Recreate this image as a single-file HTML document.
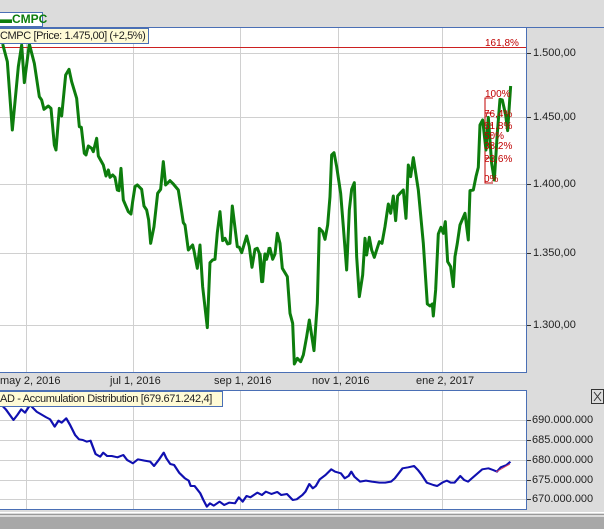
<!DOCTYPE html>
<html><head><style>
body{margin:0;width:604px;height:529px;background:#dcdcdc;position:relative;overflow:hidden;font-family:"Liberation Sans",sans-serif}
.t{position:absolute;font-size:11px;color:#222;white-space:nowrap}
</style></head><body>
<svg width="604" height="529" style="position:absolute;left:0;top:0">
<rect x="0" y="27" width="527" height="346" fill="#fff"/>
<line x1="0" y1="27.5" x2="604" y2="27.5" stroke="#4a6fb5"/>
<line x1="526.5" y1="27" x2="526.5" y2="373" stroke="#4a6fb5"/>
<line x1="0" y1="372.5" x2="527" y2="372.5" stroke="#4a6fb5"/>
<g stroke="#d0d0d0" stroke-width="1">
<line x1="26.5" y1="28" x2="26.5" y2="372"/><line x1="133.5" y1="28" x2="133.5" y2="372"/><line x1="240.5" y1="28" x2="240.5" y2="372"/><line x1="338.5" y1="28" x2="338.5" y2="372"/><line x1="442.5" y1="28" x2="442.5" y2="372"/>
<line x1="0" y1="53.5" x2="526" y2="53.5"/><line x1="0" y1="117.5" x2="526" y2="117.5"/><line x1="0" y1="184.5" x2="526" y2="184.5"/><line x1="0" y1="253.5" x2="526" y2="253.5"/><line x1="0" y1="325.5" x2="526" y2="325.5"/>
</g>
<line x1="0" y1="47.5" x2="526" y2="47.5" stroke="#cc2020"/>
<g stroke="#333"><line x1="527" y1="53.5" x2="531" y2="53.5"/><line x1="527" y1="117.5" x2="531" y2="117.5"/><line x1="527" y1="184.5" x2="531" y2="184.5"/><line x1="527" y1="253.5" x2="531" y2="253.5"/><line x1="527" y1="325.5" x2="531" y2="325.5"/></g>
<g fill="none" stroke="#c00000" stroke-width="1"><polyline points="493,98 485,98 485,183 493,183"/><line x1="485" y1="113" x2="493" y2="113"/><line x1="485" y1="125" x2="493" y2="125"/><line x1="485" y1="135" x2="493" y2="135"/><line x1="485" y1="145" x2="493" y2="145"/><line x1="485" y1="158" x2="493" y2="158"/></g>
<g fill="none" stroke="#0d7d0d" stroke-width="9" stroke-linejoin="round">
<polyline transform="translate(0,30) scale(0.3333)" points="8,42 22,95 37,300 55,110 65,45 73,158 88,42 103,100 118,200 125,210 132,238 145,228 153,235 163,345 168,360 178,235 185,258 197,135 207,118 215,155 230,205 238,290 244,292 253,370 258,375 265,348 275,355 280,365 290,325 295,378 310,405 318,438 325,420 330,442 338,435 345,442 352,480 357,482 363,415 370,510 385,545 393,552 398,515 405,470 412,465 425,478 432,528 440,540 446,570 452,640 462,590 473,490 482,478 490,395 497,465 510,452 520,462 535,480 545,545 550,578 555,585 565,660 578,645 582,662 592,715 600,645 608,770 622,893 630,698 638,690 645,688 652,608 660,545 668,632 675,625 683,642 690,640 697,528 712,650 718,652 725,668 740,618 748,650 756,712 765,658 772,655 778,670 785,755 795,672 800,688 808,652"/>
<polyline transform="translate(260,30) scale(0.3333)" points="0,670 8,755 15,672 22,680 30,655 38,688 45,672 52,610 60,640 67,715 82,740 90,850 98,880 103,1002 112,985 122,995 130,975 140,920 148,870 162,962 172,820 178,595 188,605 195,628 203,585 210,500 215,375 222,368 230,410 242,490 250,590 260,720 268,540 275,478 283,458 290,680 298,800 308,735 315,625 320,675 328,622 335,660 343,682 350,660 358,635 366,640 375,590 385,522 392,550 400,498 407,572 413,498 422,488 430,480 438,565 445,405 452,440 460,383 475,480 490,640 502,822 510,828 517,822 520,858 527,780 535,612 543,592 550,610 556,575 563,695 572,710 580,770 585,680 592,640 600,585 615,550 625,630 630,482 640,480 648,440 655,412 660,285 668,270 678,360 685,262 695,400 703,450 712,310 720,208 727,210 737,255 743,302 752,168"/>
</g>
<g font-family="Liberation Sans,sans-serif" font-size="10" fill="#c00000">
<text x="485" y="46">161,8%</text><text x="485" y="97">100%</text><text x="484" y="117">76,4%</text><text x="484" y="129">61,8%</text><text x="484" y="139">50%</text><text x="484" y="149">38,2%</text><text x="484" y="162">23,6%</text><text x="484" y="182">0%</text>
</g>
<rect x="-2" y="390" width="529" height="120" fill="#fff"/>
<rect x="-1.5" y="390.5" width="528" height="119" fill="none" stroke="#4a6fb5"/>
<g stroke="#d0d0d0"><line x1="26.5" y1="391" x2="26.5" y2="509"/><line x1="133.5" y1="391" x2="133.5" y2="509"/><line x1="240.5" y1="391" x2="240.5" y2="509"/><line x1="338.5" y1="391" x2="338.5" y2="509"/><line x1="442.5" y1="391" x2="442.5" y2="509"/>
<line x1="0" y1="420.5" x2="526" y2="420.5"/><line x1="0" y1="440.5" x2="526" y2="440.5"/><line x1="0" y1="460.5" x2="526" y2="460.5"/><line x1="0" y1="480.5" x2="526" y2="480.5"/><line x1="0" y1="499.5" x2="526" y2="499.5"/></g>
<g stroke="#333"><line x1="527" y1="420.5" x2="531" y2="420.5"/><line x1="527" y1="440.5" x2="531" y2="440.5"/><line x1="527" y1="460.5" x2="531" y2="460.5"/><line x1="527" y1="480.5" x2="531" y2="480.5"/><line x1="527" y1="499.5" x2="531" y2="499.5"/></g>
<polyline transform="translate(0,360) scale(0.3852,0.3333)" fill="none" stroke="#1010b0" stroke-width="6" stroke-linejoin="round" points="0,130 15,148 35,180 45,165 55,148 65,158 78,135 95,155 120,172 130,178 142,200 152,182 160,188 172,175 182,195 195,225 205,238 215,240 225,245 235,242 248,282 260,290 268,278 278,288 290,288 305,292 320,285 330,300 345,310 358,298 375,302 390,305 400,318 412,300 425,278 432,295 442,312 452,315 465,338 480,355 490,362 495,378 505,378 520,400 528,420 537,440 545,430 555,437 570,425 582,435 595,428 610,430 620,412 630,425 640,408 650,412 668,398 680,405 690,395 705,402 720,396 730,405 745,402 760,420 770,418 785,405 793,395 803,372 812,385 820,378 830,358 845,345 860,328 870,335 885,340 895,355 905,348 912,335 920,350 935,365 950,362 965,365 985,368 1000,368 1015,365 1025,355 1045,325 1060,322 1075,318 1085,330 1095,345 1108,368 1125,375 1135,378 1148,368 1160,362 1170,368 1180,368 1195,348 1205,360 1215,365 1225,355 1240,340 1252,328 1268,325 1280,330 1290,335 1300,322 1315,315 1325,305"/>
<line x1="496" y1="472" x2="510" y2="464" stroke="#e04060" stroke-width="1"/>
<line x1="0" y1="512.5" x2="604" y2="512.5" stroke="#fff"/>
<line x1="0" y1="514.5" x2="604" y2="514.5" stroke="#999"/>
<rect x="0" y="517" width="604" height="12" fill="#a8a8a8"/>
<rect x="591.5" y="389.5" width="12" height="14" fill="#dcdcdc" stroke="#333"/>
<path d="M594 392 L601 401 M601 392 L594 401" stroke="#333"/>
</svg>
<div style="position:absolute;left:0;top:12px;width:42px;height:13px;border:1px solid #4a6fb5;border-left:none;background:#fff;font:bold 12px 'Liberation Sans',sans-serif;color:#0d7d0d;line-height:13px;white-space:nowrap">▬CMPC</div>
<div style="position:absolute;left:0;top:28px;width:148px;height:14px;border:1px solid #4a6fb5;border-left:none;background:#fffbd6;font-size:11px;letter-spacing:-0.4px;line-height:14px;color:#222;white-space:nowrap;overflow:hidden">CMPC [Price: 1.475,00] (+2,5%)</div>
<div style="position:absolute;left:0;top:391px;width:222px;height:14px;border:1px solid #4a6fb5;border-left:none;background:#fffbd6;font-size:11px;letter-spacing:-0.35px;line-height:14px;color:#222;white-space:nowrap;overflow:hidden">AD - Accumulation Distribution [679.671.242,4]</div>
<div class="t" style="left:533px;top:47px">1.500,00</div>
<div class="t" style="left:533px;top:111px">1.450,00</div>
<div class="t" style="left:533px;top:178px">1.400,00</div>
<div class="t" style="left:533px;top:247px">1.350,00</div>
<div class="t" style="left:533px;top:319px">1.300,00</div>
<div class="t" style="left:0;top:375px">may 2, 2016</div>
<div class="t" style="left:110px;top:375px">jul 1, 2016</div>
<div class="t" style="left:214px;top:375px">sep 1, 2016</div>
<div class="t" style="left:312px;top:375px">nov 1, 2016</div>
<div class="t" style="left:416px;top:375px">ene 2, 2017</div>
<div class="t" style="left:532px;top:414px">690.000.000</div>
<div class="t" style="left:532px;top:434px">685.000.000</div>
<div class="t" style="left:532px;top:454px">680.000.000</div>
<div class="t" style="left:532px;top:474px">675.000.000</div>
<div class="t" style="left:532px;top:493px">670.000.000</div>
</body></html>
